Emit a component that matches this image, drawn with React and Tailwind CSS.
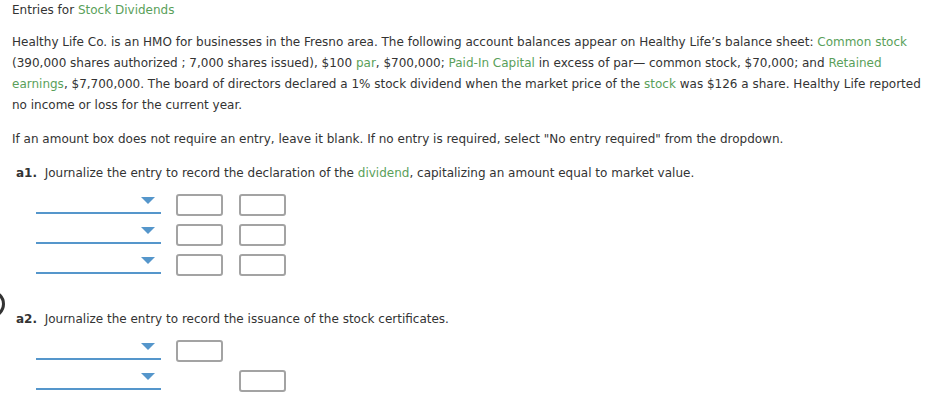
import React from 'react';

const G = ({ children }) => <span className="text-[#5a9f5a]">{children}</span>;

function Dropdown() {
  return (
    <div className="relative w-[125px] h-[20px] border-b-2 border-[#5596cb]">
      <span className="absolute right-[6px] top-[3px] w-0 h-0 border-l-[7px] border-r-[7px] border-t-[7px] border-l-transparent border-r-transparent border-t-[#5596cb]" />
    </div>
  );
}

function Box({ hidden }) {
  return (
    <div className={`w-[47px] h-[22px] rounded-[3px] ${hidden ? '' : 'border-2 border-[#a3a3a3]'}`} />
  );
}

function Row({ debit = true, credit = true }) {
  return (
    <div className="flex items-start h-[30px]">
      <Dropdown />
      <div className="ml-[15px]"><Box hidden={!debit} /></div>
      <div className="ml-[16px]"><Box hidden={!credit} /></div>
    </div>
  );
}

export default function App() {
  return (
    <div className="relative w-[941px] h-[415px] bg-white text-[#333] text-[12px] overflow-hidden" style={{ fontFamily: '"DejaVu Sans", Verdana, sans-serif' }}>
      <div className="pl-[12px] pt-[2px]">
        <div className="leading-[17px]">Entries for <G>Stock Dividends</G></div>

        <p className="mt-[13px] leading-[21px] pr-[4px]">
          Healthy Life Co. is an HMO for businesses in the Fresno area. The following account balances appear on Healthy Life’s balance sheet: <G>Common stock</G> (390,000 shares authorized ; 7,000 shares issued), $100 <G>par</G>, $700,000; <G>Paid-In Capital</G> in excess of par— common stock, $70,000; and <G>Retained earnings</G>, $7,700,000. The board of directors declared a 1% stock dividend when the market price of the <G>stock</G> was $126 a share. Healthy Life reported no income or loss for the current year.
        </p>

        <p className="mt-[13px] leading-[21px]">
          If an amount box does not require an entry, leave it blank. If no entry is required, select "No entry required" from the dropdown.
        </p>
      </div>

      <div className="pl-[16px] mt-[15px] leading-[17px]">
        <b>a1.</b>&nbsp; Journalize the entry to record the declaration of the <G>dividend</G>, capitalizing an amount equal to market value.
      </div>

      <div className="pl-[36px] mt-[12px]">
        <Row />
        <Row />
        <Row />
      </div>

      <div className="relative pl-[16px] mt-[27px] leading-[17px]">
        <span className="absolute left-[-23px] top-[-21px] w-[28px] h-[28px] rounded-full border-[3px] border-[#333]" />
        <b>a2.</b>&nbsp; Journalize the entry to record the issuance of the stock certificates.
      </div>

      <div className="pl-[36px] mt-[12px]">
        <Row credit={false} />
        <Row debit={false} />
      </div>
    </div>
  );
}
